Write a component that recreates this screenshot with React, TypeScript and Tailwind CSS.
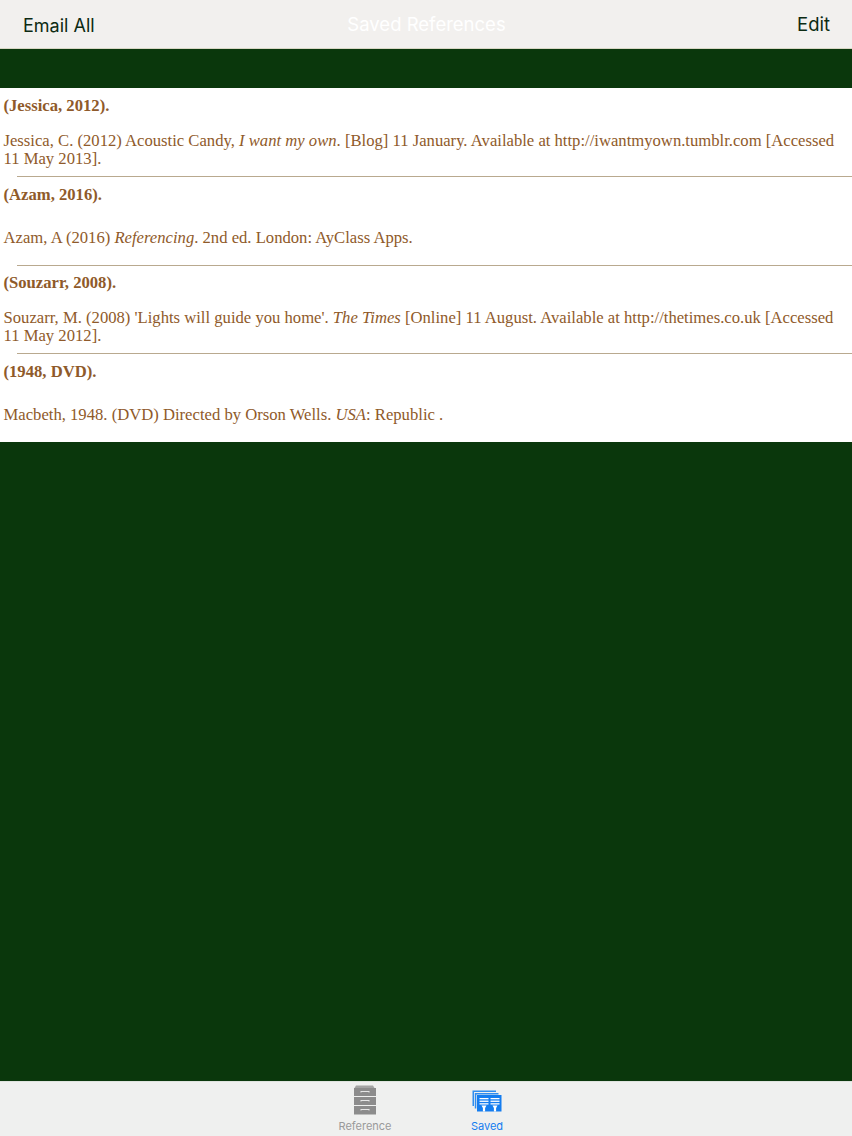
import React from "react";

const serif = { fontFamily: '"Liberation Serif", serif' };

function Row({ title, children, last }: { title: string; children: React.ReactNode; last?: boolean }) {
  return (
    <div className="relative h-[88.5px] pl-[3.5px] pt-[9px] text-[#8f5a2a]">
      <div className="h-[18px] text-[16.65px] font-bold leading-[18px]">{title}</div>
      <div className="mt-[16.5px] flex h-[36px] items-center text-[16.65px] leading-[18px]">
        <div>{children}</div>
      </div>
      {!last && <div className="absolute bottom-[-0.5px] left-[17px] right-0 h-px bg-[#b9a98f]" />}
    </div>
  );
}

function CabinetIcon() {
  return (
    <svg width="24" height="30" viewBox="0 0 24 30">
      <path d="M3 0.5h17l1.5 2.5H1.5z" fill="#a4a4a4" />
      <rect x="1" y="3" width="22" height="8" fill="#8c8c8c" />
      <rect x="1" y="12" width="22" height="8" fill="#8c8c8c" />
      <rect x="1" y="21" width="22" height="8.5" fill="#8c8c8c" />
      <path d="M7.5 7.5V6h9v1.5h-1V7h-7v.5z" fill="#e6e6e6" />
      <path d="M7.5 16.5V15h9v1.5h-1V16h-7v.5z" fill="#e6e6e6" />
      <path d="M7.5 25.5V24h9v1.5h-1V25h-7v.5z" fill="#e6e6e6" />
    </svg>
  );
}

function SavedIcon() {
  return (
    <svg width="30" height="22" viewBox="0 0 30 22">
      <path d="M0.5 0.5H24V2H2V16H0.5z" fill="#2f8df0" />
      <path d="M2.8 3H26.5V4.5H4.3V18.5H2.8z" fill="#2f8df0" />
      <rect x="5" y="5" width="24.5" height="16.5" fill="#147df0" />
      <rect x="7.5" y="8" width="9" height="1.3" fill="#ffffff" />
      <rect x="7.5" y="10.6" width="9" height="1.3" fill="#ffffff" />
      <rect x="7.5" y="13.2" width="9" height="1.3" fill="#ffffff" />
      <rect x="18.5" y="8" width="9" height="1.3" fill="#ffffff" />
      <rect x="18.5" y="10.6" width="9" height="1.3" fill="#ffffff" />
      <rect x="18.5" y="13.2" width="9" height="1.3" fill="#ffffff" />
      <path d="M9.5 15.5h5l-1.4 2.5v3.5h-2.2V18z" fill="#ffffff" />
      <path d="M20.5 15.5h5l-1.4 2.5v3.5h-2.2V18z" fill="#ffffff" />
    </svg>
  );
}

export default function App() {
  return (
    <div className="flex h-[1136px] w-[852px] flex-col overflow-hidden bg-[#0a370c]">
      <header
        className="flex h-[49px] items-center border-b border-[#d8d6c4] bg-[#f2f0ee] pl-[23px] pr-[22px] pt-[2px] text-[18.5px] text-[#0c2a12]"
        style={{ fontFamily: 'Inter, sans-serif' }}
      >
        <span className="flex-1 text-[18px]">Email All</span>
        <span className="text-white">Saved References</span>
        <span className="flex-1 text-right">Edit</span>
      </header>
      <main className="mt-[39px] flex-1">
        <div className="bg-white" style={serif}>
          <Row title="(Jessica, 2012).">
            Jessica, C. (2012) Acoustic Candy, <i>I want my own</i>. [Blog] 11 January. Available at http://iwantmyown.tumblr.com [Accessed 11 May 2013].
          </Row>
          <Row title="(Azam, 2016).">
            Azam, A (2016) <i>Referencing</i>. 2nd ed. London: AyClass Apps.
          </Row>
          <Row title="(Souzarr, 2008).">
            Souzarr, M. (2008) 'Lights will guide you home'. <i>The Times</i> [Online] 11 August. Available at http://thetimes.co.uk [Accessed 11 May 2012].
          </Row>
          <Row title="(1948, DVD)." last>
            Macbeth, 1948. (DVD) Directed by Orson Wells. <i>USA</i>: Republic .
          </Row>
        </div>
      </main>
      <nav
        className="flex h-[55px] justify-center gap-[62px] border-t border-[#dfe3df] bg-[#eff0ef] text-[11px] leading-[13px]"
        style={{ fontFamily: 'Inter, sans-serif' }}
      >
        <div className="flex w-[60px] flex-col items-center pt-[3px] text-[#9a9a9a]">
          <CabinetIcon />
          <span className="mt-[5px]">Reference</span>
        </div>
        <div className="flex w-[60px] flex-col items-center pt-[8px] text-[#147df0]">
          <SavedIcon />
          <span className="mt-[8px]">Saved</span>
        </div>
      </nav>
    </div>
  );
}
